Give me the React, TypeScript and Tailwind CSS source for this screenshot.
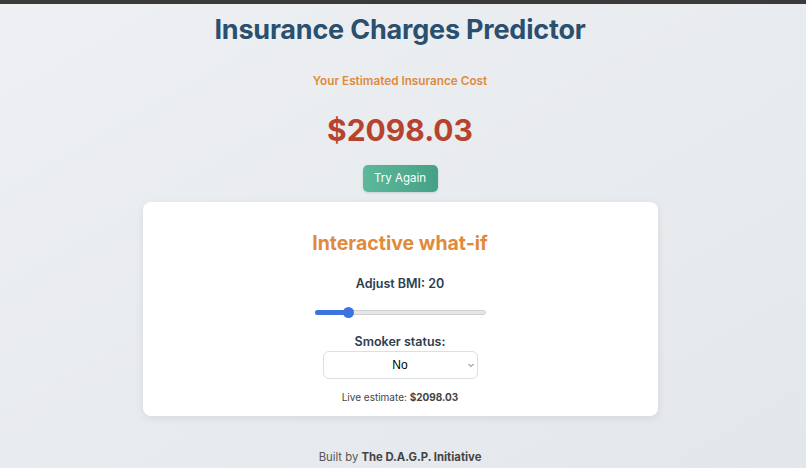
import React, { useState } from "react";

const font = { fontFamily: "Inter, 'Noto Sans', sans-serif" };

export default function App() {
  const [smoker, setSmoker] = useState("No");
  const bmi = 20;

  return (
    <div
      className="min-h-[468px] w-full flex flex-col bg-gradient-to-br from-[#eef0f3] to-[#e3e7eb]"
      style={font}
    >
      <div className="h-[4px] bg-[#3a3a3a]" />

      <div className="flex flex-col items-center pr-[6px]">
        <h1 className="mt-[11px] text-[27px] leading-[30px] font-bold text-[#2b4f6f] tracking-[-0.2px]">
          Insurance Charges Predictor
        </h1>

        <div className="mt-[28px] text-[11.75px] leading-[16px] font-semibold text-[#e08a3c]">
          Your Estimated Insurance Cost
        </div>

        <div className="mt-[23px] text-[30px] leading-[36px] font-bold text-[#b7432f]">
          $2098.03
        </div>

        <button className="mt-[17px] w-[75px] h-[27px] rounded-[5px] bg-gradient-to-r from-[#5cb89b] to-[#46a085] text-white text-[11.5px] shadow-sm">
          Try Again
        </button>

        {/* What-if card */}
        <div className="mt-[10px] w-[515px] h-[214px] bg-white rounded-[8px] shadow-[0_2px_8px_rgba(0,0,0,0.08)] flex flex-col items-center">
          <h2 className="mt-[29px] text-[19.5px] leading-[24px] font-bold text-[#e08a3c]">
            Interactive what-if
          </h2>

          <div className="mt-[20px] text-[12.5px] leading-[18px] font-semibold text-[#2c3e50]">
            Adjust BMI: {bmi}
          </div>

          {/* slider */}
          <div className="relative mt-[17px] w-[171px] h-[5px] rounded-full bg-[#e6e6e6] border border-[#d0d0d0]">
            <div className="absolute left-[-1px] top-[-1px] h-[5px] w-[34px] rounded-full bg-[#3b74e0]" />
            <div className="absolute left-[27px] top-[-4px] h-[11px] w-[11px] rounded-full bg-[#3b74e0]" />
          </div>

          <div className="mt-[18px] text-[12.5px] leading-[18px] font-semibold text-[#2c3e50]">
            Smoker status:
          </div>

          <div className="relative mt-[0px] w-[155px] h-[28px]">
            <select
              value={smoker}
              onChange={(e) => setSmoker(e.target.value)}
              className="appearance-none w-full h-full rounded-[6px] border border-[#dcdfe3] bg-white text-center text-[12px] text-black"
              style={{ fontFamily: "'Liberation Sans', Arial, sans-serif" }}
            >
              <option>No</option>
              <option>Yes</option>
            </select>
            <svg
              className="absolute right-[4px] top-[12px] pointer-events-none"
              width="6"
              height="5"
              viewBox="0 0 6 5"
            >
              <path d="M0.5 1 L3 3.5 L5.5 1" stroke="#666" strokeWidth="1" fill="none" />
            </svg>
          </div>

          <div className="mt-[11px] text-[10px] leading-[14px] text-[#444]">
            Live estimate: <span className="font-bold">$2098.03</span>
          </div>
        </div>

        <div className="mt-[33px] text-[11.3px] leading-[16px] text-[#555]">
          Built by <span className="font-bold text-[#444]">The D.A.G.P. Initiative</span>
        </div>
      </div>
    </div>
  );
}
